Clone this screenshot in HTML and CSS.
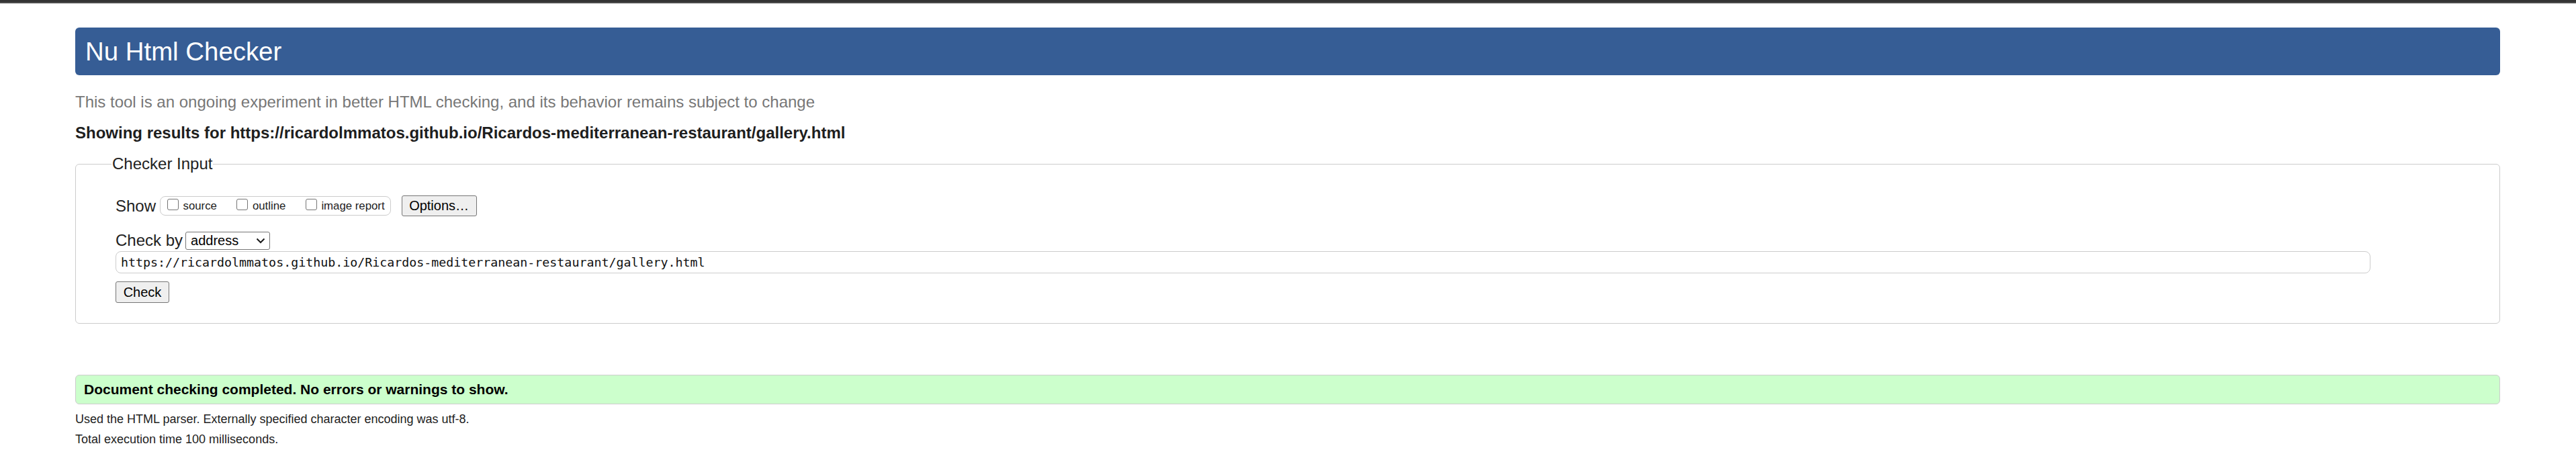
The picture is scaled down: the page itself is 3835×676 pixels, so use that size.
FILE: index.html
```html
<!DOCTYPE html>
<html lang="en">
<head>
<meta charset="utf-8">
<title>Showing results for https://ricardolmmatos.github.io/Ricardos-mediterranean-restaurant/gallery.html - Nu Html Checker</title>
<link rel="stylesheet" href="styles.css">
</head>
<body>
<div class="topbar"></div>
<div class="page">
  <h1 class="title">Nu Html Checker</h1>
  <p class="about">This tool is an ongoing experiment in better HTML checking, and its behavior remains subject to change</p>
  <p class="results-for">Showing results for https://ricardolmmatos.github.io/Ricardos-mediterranean-restaurant/gallery.html</p>
  <form class="checker-form">
    <fieldset class="input-box">
      <legend class="input-legend">Checker Input</legend>
      <div class="show-row">
        <span class="row-label">Show</span>
        <div class="checks">
          <label class="check-item"><input type="checkbox" class="cb"><span>source</span></label>
          <label class="check-item"><input type="checkbox" class="cb"><span>outline</span></label>
          <label class="check-item"><input type="checkbox" class="cb"><span>image report</span></label>
        </div>
        <button type="button" class="btn btn-options">Options…</button>
      </div>
      <div class="checkby-row">
        <span class="row-label">Check by</span>
        <span class="select-wrap">
          <select class="select"><option>address</option></select>
          <svg class="chevron" width="14" height="9" viewBox="0 0 14 9"><path d="M1.5 1.5 L7 7 L12.5 1.5" fill="none" stroke="#1a1a1a" stroke-width="2"/></svg>
        </span>
      </div>
      <input class="url" type="text" value="https://ricardolmmatos.github.io/Ricardos-mediterranean-restaurant/gallery.html">
      <div class="submit-row"><button type="button" class="btn btn-check">Check</button></div>
    </fieldset>
  </form>
  <div class="success">Document checking completed. No errors or warnings to show.</div>
  <p class="details first">Used the HTML parser. Externally specified character encoding was utf-8.</p>
  <p class="details">Total execution time 100 milliseconds.</p>
</div>
</body>
</html>
```
FILE: styles.css
```css
html, body {
  margin: 0;
  padding: 0;
  background: #fff;
}
body {
  font-family: "Liberation Sans", Arial, sans-serif;
  font-size: 24px;
  color: #222;
}
.topbar {
  height: 3px;
  background: #333;
  border-bottom: 2px solid #4d4d4d;
}
.page {
  margin: 0 113px 0 112px;
}
.title {
  margin: 36px 0 0;
  height: 71px;
  box-sizing: border-box;
  padding: 1px 15px 0;
  line-height: 70px;
  font-size: 38.4px;
  font-weight: normal;
  color: #fff;
  background: #365d95;
  border-radius: 6px;
}
.about {
  margin: 26px 0 0;
  line-height: 28px;
  color: #777;
}
.results-for {
  margin: 18px 0 0;
  line-height: 28px;
  font-weight: bold;
  color: #1e1e1e;
}
.checker-form {
  margin: 18px 0 0;
}
.input-box {
  margin: 0;
  min-width: 0;
  border: 1px solid #ccc;
  border-radius: 6px;
  padding: 33px 59px 30px;
}
.input-legend {
  font-size: 24px;
  line-height: 28px;
  padding: 0 1px;
  margin-left: -6px;
  color: #222;
}
.show-row {
  display: flex;
  align-items: center;
  height: 31px;
}
.row-label {
  line-height: 28px;
  white-space: nowrap;
}
.checks {
  display: flex;
  align-items: center;
  gap: 29.5px;
  height: 29px;
  box-sizing: border-box;
  margin-left: 6px;
  padding: 0 8px 0 10px;
  border: 1px solid #ccc;
  border-radius: 8px;
}
.check-item {
  display: flex;
  align-items: center;
  font-size: 16.8px;
  line-height: 19px;
  color: #222;
  white-space: nowrap;
}
.cb {
  appearance: none;
  -webkit-appearance: none;
  width: 17px;
  height: 17px;
  box-sizing: border-box;
  margin: 0 6.5px 5px 0;
  border: 1px solid #767676;
  border-radius: 3px;
  background: #fff;
}
.btn {
  font-family: "Liberation Sans", Arial, sans-serif;
  font-size: 20px;
  color: #000;
  background: #efefef;
  border: 1px solid #767676;
  border-radius: 3px;
  padding: 0 11px;
  margin: 0;
}
.btn-options {
  margin-left: 16px;
  width: 112px;
  height: 31px;
  padding: 0;
  line-height: 29px;
}
.checkby-row {
  display: flex;
  align-items: center;
  height: 28px;
  margin-top: 22px;
}
.select-wrap {
  position: relative;
  display: inline-flex;
  margin-left: 4px;
}
.select {
  appearance: none;
  -webkit-appearance: none;
  width: 126px;
  height: 27px;
  box-sizing: border-box;
  margin: 0;
  padding: 0 0 0 7px;
  font-family: "Liberation Sans", Arial, sans-serif;
  font-size: 20px;
  color: #000;
  background: #fff;
  border: 1px solid #767676;
  border-radius: 3px;
}
.chevron {
  position: absolute;
  right: 7px;
  top: 9px;
  pointer-events: none;
}
.url {
  display: block;
  width: 3357px;
  height: 33px;
  box-sizing: border-box;
  margin: 2px 0 0;
  padding: 0 7px;
  border: 1px solid #ccc;
  border-radius: 8px;
  font-family: "DejaVu Sans Mono", "Liberation Mono", monospace;
  font-size: 18.3px;
  color: #111;
  background: #fff;
}
.submit-row {
  margin-top: 12px;
}
.btn-check {
  height: 32px;
  line-height: 30px;
  width: 80px;
  padding: 0;
}
.success {
  margin-top: 76px;
  height: 44px;
  box-sizing: border-box;
  line-height: 42px;
  padding: 0 12px;
  border: 1px solid #ccc;
  border-radius: 6px;
  background: #ccffcc;
  font-size: 21px;
  font-weight: bold;
  color: #000;
}
.details {
  margin: 0;
  font-size: 18px;
  line-height: 30px;
  color: #222;
}
.details.first {
  margin-top: 7px;
}
```
